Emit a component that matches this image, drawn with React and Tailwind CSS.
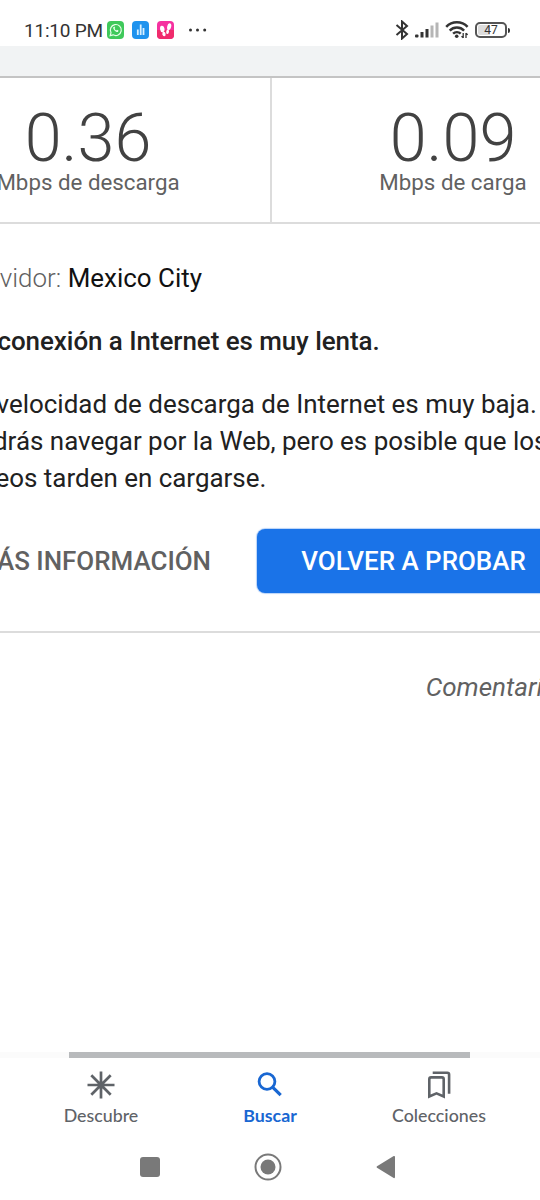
const results = [
  { value: "0.36", label: "Mbps de descarga" },
  { value: "0.09", label: "Mbps de carga" },
];

const tabs = [
  { name: "Descubre", icon: <AsteriskIcon />, active: false },
  { name: "Buscar", icon: <SearchIcon />, active: true },
  { name: "Colecciones", icon: <CollectionsIcon />, active: false },
];

function AsteriskIcon() {
  return (
    <svg width="28" height="28" viewBox="0 0 28 28" stroke="currentColor" strokeWidth="2.7">
      <path d="M14 .5v27M.5 14h27M4.300 4.300l19.400 19.400M23.700 4.300L4.300 23.700" />
    </svg>
  );
}

function SearchIcon() {
  return (
    <svg width="28" height="28" viewBox="0 0 28 28" fill="none" stroke="currentColor" strokeWidth="2.8">
      <circle cx="11" cy="10.5" r="7.9" />
      <path d="M16.3 15.8l8.4 8.4" strokeWidth="3.2" />
    </svg>
  );
}

function CollectionsIcon() {
  return (
    <svg width="28" height="28" viewBox="0 0 28 28" fill="none" stroke="currentColor" strokeWidth="2.6">
      <path d="M4.3 25.5V8.2q0-1.8 1.8-1.8h10.8q1.800 0 1.800 1.800v17.300l-7.200-3.200z" />
      <path d="M7.7 1.7h14.6q1.800 0 1.800 1.800v19.300" />
    </svg>
  );
}

function StatusBar() {
  return (
    <header className="flex h-[46px] shrink-0 items-start justify-between pt-[20px] pr-[30px] pl-[24px] text-[#333]">
      <div className="flex h-5 items-center">
        <span className="w-[83px] pt-0.5 text-[19px] leading-5 tracking-[-0.2px] whitespace-nowrap">11:10 PM</span>
        <svg width="17" height="18" viewBox="0 0 17 18">
          <rect width="17" height="18" rx="4" fill="#3fc95b" />
          <path d="M3.2 14.6l.8-2.9a5.5 5.5 0 1 1 2.1 2.1z" fill="none" stroke="#e8ffe9" strokeWidth="1.2" />
          <path d="M6.3 6.2c-.7 2 2.7 5.4 4.7 4.7l.5-1.3-1.5-.8-.8.7c-.8-.4-1.300-.9-1.600-1.700l.6-.8-.7-1.500z" fill="#e8ffe9" />
        </svg>
        <svg className="ml-2" width="17" height="18" viewBox="0 0 17 18">
          <rect width="17" height="18" rx="4" fill="#1f93ee" />
          <path d="M5.8 14V8.5M8.7 14V3.5M11.5 14V7" stroke="#d9f0ff" strokeWidth="1.8" />
        </svg>
        <svg className="ml-2" width="17" height="18" viewBox="0 0 17 18">
          <rect width="17" height="18" rx="4" fill="#f531a0" />
          <path d="M0 9h17v5a4 4 0 0 1-4 4H4a4 4 0 0 1-4-4z" fill="#f02c6c" />
          <g fill="#fff">
            <ellipse cx="5.3" cy="8" rx="2.2" ry="3.2" transform="rotate(-10 5.3 8)" />
            <ellipse cx="7" cy="13" rx="1.6" ry="2.2" transform="rotate(-12 7 13)" />
            <ellipse cx="12.2" cy="5.7" rx="2" ry="3.5" transform="rotate(12 12.2 5.7)" />
            <ellipse cx="10.6" cy="10.8" rx="1.4" ry="2.2" transform="rotate(12 10.6 10.8)" />
          </g>
        </svg>
        <svg className="ml-[14px]" width="20" height="4" viewBox="0 0 20 4" fill="#333">
          <circle cx="2.5" cy="2" r="1.5" />
          <circle cx="9.5" cy="2" r="1.5" />
          <circle cx="16.7" cy="2" r="1.5" />
        </svg>
      </div>
      <div className="flex h-5 items-center">
        <svg width="14" height="20" viewBox="0 0 14 20" fill="none" stroke="#333" strokeWidth="2">
          <path d="M1.5 5l10.5 9-5 4.5V1.5l5 4.5-10.5 9" />
        </svg>
        <svg className="ml-[6px]" width="25" height="18" viewBox="0 0 25 18">
          <g fill="#333">
            <rect x="0" y="13.5" width="3.5" height="3" rx="1" />
            <rect x="5.5" y="11" width="3" height="5.5" />
            <rect x="10.5" y="8" width="3" height="8.5" />
          </g>
          <g fill="#b5b5b5">
            <rect x="15.5" y="4.5" width="3" height="12" />
            <rect x="20.5" y="1.5" width="3" height="15" />
          </g>
        </svg>
        <svg className="ml-[5px]" width="24" height="18" viewBox="0 0 24 18" fill="none" stroke="#333" strokeWidth="2.5">
          <path d="M1.2 5.8a15 15 0 0 1 21.4 0M4.7 9.6a10.2 10.2 0 0 1 14.4 0M8.1 12.7a5.5 5.5 0 0 1 7.6 0" />
          <circle cx="11.7" cy="15.3" r="1.8" fill="#333" stroke="none" />
          <path d="M18.2 12v5M16.5 15.2l1.7 1.6M21 17v-5M22.7 13.7L21 12.2" strokeWidth="1.3" />
        </svg>
        <div className="relative ml-[6px] flex h-4 w-8 items-center justify-center rounded-[5px] border-2 border-[#555]">
          <div className="absolute inset-y-px left-px w-3 rounded-l-[2px] bg-[#dcdcdc]" />
          <span className="relative text-[12px] leading-none">47</span>
        </div>
        <div className="ml-px h-[5px] w-[2px] rounded-r bg-[#333]" />
      </div>
    </header>
  );
}

function SpeedTest() {
  return (
    <section className="-ml-[94px] w-[728px] shrink-0">
      <div className="flex h-[146px] border-b-2 border-[#dcdcdc]">
        {results.map((r) => (
          <div key={r.label} className="flex w-[362px] flex-col items-center border-[#dcdcdc] pt-[29px] first:w-[366px] first:border-r-2">
            <div className="text-[66.5px] leading-[62px] font-light text-[#424242]">{r.value}</div>
            <div className="text-[22.3px] leading-[26px] text-[#616161]">{r.label}</div>
          </div>
        ))}
      </div>

      <div className="pr-[64px] pl-[56px] text-[25.95px] leading-[37px] whitespace-nowrap text-[#212121]">
        <p className="mt-[36px]">
          <span className="font-light text-[#616161]">Servidor:</span> <span className="text-[#111]">Mexico City</span>
        </p>
        <p className="mt-[26px] font-medium tracking-[-0.05px]">Tu conexión a Internet es muy lenta.</p>
        <p className="mt-[26px]">
          La velocidad de descarga de Internet es muy baja.
          <br />
          Podrás navegar por la Web, pero es posible que los
          <br />
          videos tarden en cargarse.
        </p>
        <div className="mt-[32px] flex items-center justify-end font-medium">
          <button className="mr-[46px] text-[#616161]">MÁS INFORMACIÓN</button>
          <button className="h-16 w-[313px] rounded-lg bg-[#1a73e8] text-white shadow-[0_0_1px_1px_#b9d3f8]">
            VOLVER A PROBAR
          </button>
        </div>
      </div>

      <div className="mt-[38px] border-t-2 border-[#dcdcdc] pt-[36px] pr-[64px] text-right text-[26px] leading-[37px] text-[#616161] italic">
        Comentarios
      </div>
    </section>
  );
}

function BottomTabs() {
  return (
    <nav className="flex h-[74px] shrink-0 justify-center pt-[13px] text-[#5f6368]">
      {tabs.map((tab) => (
        <button
          key={tab.name}
          className={`flex w-[169px] flex-col items-center font-[Lato] text-[17.8px] leading-5 ${tab.active ? "font-bold text-[#1967d2]" : "font-medium"}`}
        >
          {tab.icon}
          <span className="mt-[6px]">{tab.name}</span>
        </button>
      ))}
    </nav>
  );
}

function SystemNav() {
  return (
    <div className="flex h-[68px] shrink-0 items-center justify-center gap-[94px] pt-[2px] pr-[4px] text-[#797979]">
      <div className="h-5 w-5 rounded-[3px] bg-[#797979]" />
      <svg width="28" height="28" viewBox="0 0 28 28">
        <circle cx="14" cy="14" r="12.5" fill="none" stroke="currentColor" strokeWidth="2" />
        <circle cx="14" cy="14" r="7.5" fill="currentColor" />
      </svg>
      <svg width="20" height="24" viewBox="0 0 20 24" fill="currentColor">
        <path d="M1 11.2L17.700 1Q19 .5 19 2v20q0 1.500-1.300 1L1 12.800q-1-.8 0-1.600z" />
      </svg>
    </div>
  );
}

export default function App() {
  return (
    <div className="flex h-[1200px] w-[540px] flex-col overflow-hidden bg-white font-[Roboto,sans-serif]">
      <StatusBar />
      <div className="h-8 shrink-0 border-b-2 border-[#c4c4c4] bg-[#f1f3f4]" />
      <SpeedTest />
      <div className="grow" />
      {/* horizontal scroll thumb */}
      <div className="h-[6px] shrink-0 bg-[#fbfbfb] px-[69px]">
        <div className="h-full w-[401px] bg-[#b8babc]" />
      </div>
      <BottomTabs />
      <SystemNav />
    </div>
  );
}
